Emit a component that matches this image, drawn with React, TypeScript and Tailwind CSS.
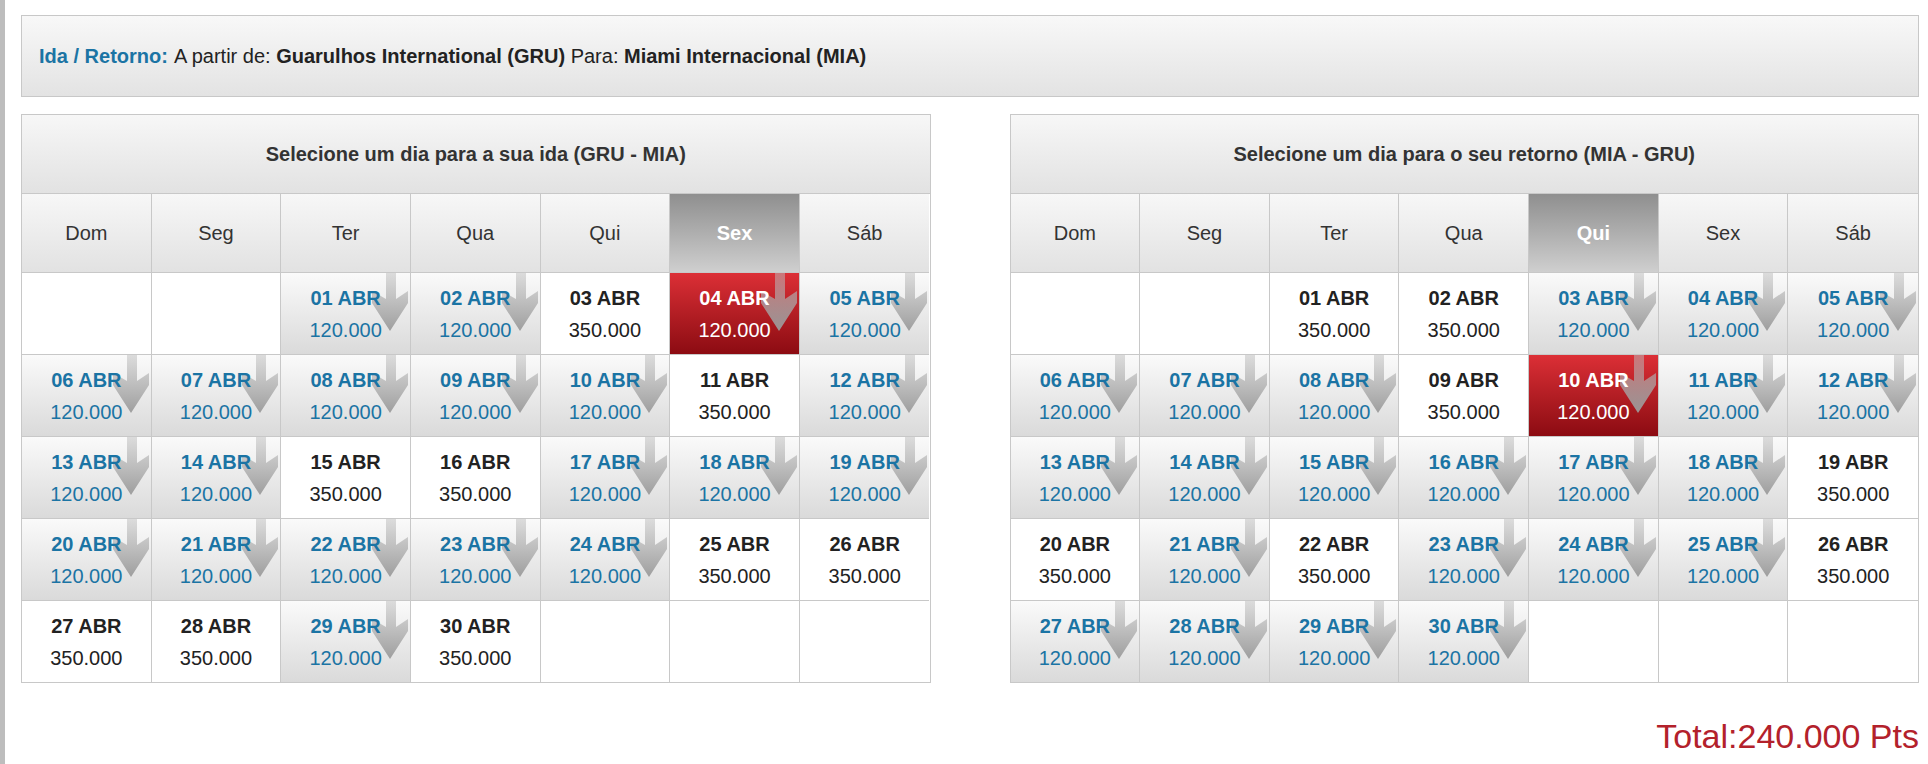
import React from "react";

type Cell = { d: number; avail: boolean; sel?: boolean } | null;

const Arrow = () => (
  <svg className="absolute right-[2px] top-0" width="44" height="58" viewBox="0 0 44 58">
    <defs>
      <linearGradient id="ag" x1="0" y1="0" x2="0" y2="1">
        <stop offset="0" stopColor="#bdbdbd" stopOpacity="0.5" />
        <stop offset="1" stopColor="#9a9a9a" stopOpacity="0.95" />
      </linearGradient>
    </defs>
    <polygon points="22,0 32,0 32,26 44,18 44,30 26,58 8,30 8,18 22,26" fill="url(#ag)" />
  </svg>
);

function build(start: number, avail: number[], sel: number): Cell[] {
  const cells: Cell[] = [];
  for (let i = 0; i < start; i++) cells.push(null);
  for (let d = 1; d <= 30; d++) cells.push({ d, avail: avail.includes(d), sel: d === sel });
  while (cells.length < 35) cells.push(null);
  return cells;
}

const days = ["Dom", "Seg", "Ter", "Qua", "Qui", "Sex", "Sáb"];

function Table({ title, cells, hl }: { title: string; cells: Cell[]; hl: number }) {
  return (
    <div className="flex-1 border border-[#c8c8c8]">
      <div className="h-[79px] flex items-center justify-center bg-gradient-to-b from-[#f7f7f7] to-[#e2e2e2] border-b border-[#c8c8c8] text-[20px] font-bold text-[#333]">
        {title}
      </div>
      <div className="grid grid-cols-7">
        {days.map((d, i) => (
          <div
            key={d}
            className={
              "h-[78px] flex items-center justify-center text-[20px] border-[#c8c8c8] " +
              (i < 6 ? "border-r " : "") +
              (i === hl
                ? "bg-gradient-to-b from-[#8f8f8f] to-[#cfcfcf] text-white font-bold"
                : "bg-gradient-to-b from-[#f7f7f7] to-[#e2e2e2] text-[#333]")
            }
          >
            {d}
          </div>
        ))}
        {cells.map((c, i) => {
          const br = i % 7 < 6 ? "border-r " : "";
          if (!c) return <div key={i} className={"h-[82px] bg-white border-t border-[#c8c8c8] " + br} />;
          const dd = String(c.d).padStart(2, "0") + " ABR";
          const bg = c.sel
            ? "bg-gradient-to-b from-[#dc2f36] to-[#8c0b12] text-white"
            : c.avail
            ? "bg-gradient-to-b from-[#fafafa] to-[#dadada] text-[#1b74a4]"
            : "bg-white text-[#222]";
          return (
            <div key={i} className={"relative h-[82px] border-t border-[#c8c8c8] overflow-hidden flex flex-col items-center justify-center " + br + bg}>
              {(c.avail || c.sel) && <Arrow />}
              <div className="relative text-[20px] font-bold leading-[32px]">{dd}</div>
              <div className="relative text-[20px] leading-[32px]">{c.avail || c.sel ? "120.000" : "350.000"}</div>
            </div>
          );
        })}
      </div>
    </div>
  );
}

export default function App() {
  const ida = build(2, [1, 2, 5, 6, 7, 8, 9, 10, 12, 13, 14, 17, 18, 19, 20, 21, 22, 23, 24, 29], 4);
  const ret = build(
    2,
    [3, 4, 5, 6, 7, 8, 11, 12, 13, 14, 15, 16, 17, 18, 21, 23, 24, 25, 27, 28, 29, 30],
    10
  );
  return (
    <div className="w-[1928px] h-[764px] bg-white flex" style={{ fontFamily: '"Liberation Sans", Arial, sans-serif' }}>
      <div className="w-[5px] bg-[#bdbdbd]" />
      <div className="flex-1 pl-[16px] pr-[9px] pt-[15px]">
        <div className="h-[82px] border border-[#c8c8c8] bg-gradient-to-b from-[#f8f8f8] to-[#e3e3e3] flex items-center px-[17px] text-[20px] text-[#222]">
          <span className="text-[#1b74a4] font-bold mr-[6px]">Ida / Retorno:</span>
          A partir de:&nbsp;<b>Guarulhos International (GRU)</b>&nbsp;Para:&nbsp;<b>Miami Internacional (MIA)</b>
        </div>
        <div className="flex gap-[79px] mt-[17px]">
          <Table title="Selecione um dia para a sua ida (GRU - MIA)" cells={ida} hl={5} />
          <Table title="Selecione um dia para o seu retorno (MIA - GRU)" cells={ret} hl={4} />
        </div>
        <div className="text-right text-[34px] text-[#b3212b] mt-[28px]">Total:240.000 Pts</div>
      </div>
    </div>
  );
}
